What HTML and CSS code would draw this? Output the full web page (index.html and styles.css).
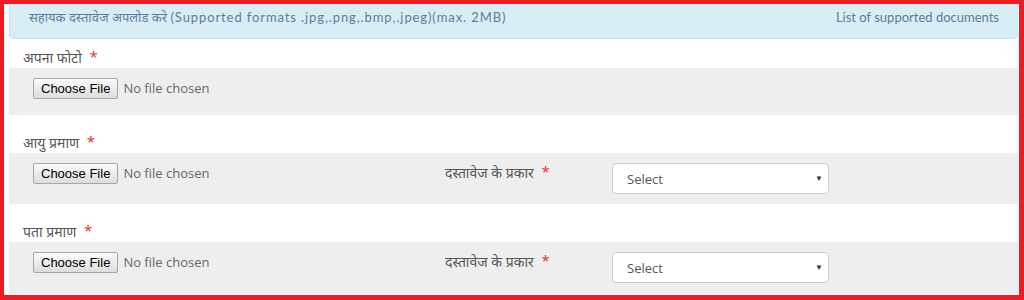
FILE: index.html
```html
<!DOCTYPE html>
<html>

<head>
  <meta charset="UTF-8">
  <title>दस्तावेज अपलोड</title>
  <link rel="stylesheet" href="styles.css">
</head>

<body>
  <div class="frame">
    <div class="uploadInfo">
      <span class="infoText">सहायक दस्तावेज अपलोड करे <span class="formats">(Supported formats .jpg,.png,.bmp,.jpeg)(max. 2MB)</span></span>
      <a class="docList">List of supported documents</a>
    </div>

    <div class="docGroup first">
      <div class="docLabel">अपना फोटो <span class="required">*</span></div>
      <div class="docRow">
        <div class="fileCol">
          <label class="fileInput"><span class="fileBtn">Choose File</span><span class="fileName">No file chosen</span></label>
        </div>
      </div>
    </div>

    <div class="docGroup">
      <div class="docLabel">आयु प्रमाण <span class="required">*</span></div>
      <div class="docRow">
        <div class="fileCol">
          <label class="fileInput"><span class="fileBtn">Choose File</span><span class="fileName">No file chosen</span></label>
        </div>
        <div class="typeLabel">दस्तावेज के प्रकार <span class="required">*</span></div>
        <div class="selectWrap">
          <select class="docType">
            <option>Select</option>
          </select>
          <span class="caret">▼</span>
        </div>
      </div>
    </div>

    <div class="docGroup">
      <div class="docLabel">पता प्रमाण <span class="required">*</span></div>
      <div class="docRow">
        <div class="fileCol">
          <label class="fileInput"><span class="fileBtn">Choose File</span><span class="fileName">No file chosen</span></label>
        </div>
        <div class="typeLabel">दस्तावेज के प्रकार <span class="required">*</span></div>
        <div class="selectWrap">
          <select class="docType">
            <option>Select</option>
          </select>
          <span class="caret">▼</span>
        </div>
      </div>
    </div>
  </div>
</body>

</html>
```

FILE: styles.css
```css
html,
body {
  margin: 0;
  padding: 0;
}

body {
  width: 1024px;
  height: 300px;
  overflow: hidden;
  background-color: #fff;
  font-family: "Open Sans", "Noto Sans", "Noto Sans Devanagari", "Lohit Devanagari", sans-serif;
  color: #555;
}

.frame {
  box-sizing: border-box;
  width: 1024px;
  height: 300px;
  overflow: hidden;
  border: solid #ed1c24;
  border-width: 4px 5px 5px 4px;
  padding: 0 1px 0 5px;
  background-color: #fff;
}

.uploadInfo {
  display: flex;
  justify-content: space-between;
  height: 20px;
  margin-top: -10px;
  padding: 12px 18px 11px 19px;
  line-height: 20px;
  font-size: 13px;
  color: #5d7d97;
  background-color: #d9edf7;
  border: 1px solid #bce8f1;
  border-radius: 4px;
}

.formats,
.docList {
  font-family: "Lato", "Liberation Sans", sans-serif;
}

.formats {
  letter-spacing: 0.9px;
}

.docLabel {
  height: 20px;
  margin-top: 18px;
  padding-left: 14px;
  line-height: 20px;
  font-size: 14px;
}

.docGroup.first .docLabel {
  margin-top: 9px;
}

.required {
  margin-left: 4px;
  color: #ec2a2a;
  font-size: 15px;
  line-height: 1;
  vertical-align: top;
  position: relative;
  top: 1px;
}

.docRow {
  display: grid;
  grid-template-columns: 412px 167px 217px;
  min-height: 27px;
  padding: 10px 0 10px 24px;
  background-color: #eee;
}

.fileInput {
  display: flex;
  align-items: center;
  height: 21px;
}

.fileBtn {
  box-sizing: border-box;
  height: 21px;
  padding: 0 7px;
  line-height: 19px;
  font-family: "Liberation Sans", Arial, sans-serif;
  font-size: 13px;
  color: #000;
  background: linear-gradient(#fbfbfb, #dddddd);
  border: 1px solid #a6a6a6;
  border-radius: 2px;
}

.fileName {
  margin-left: 5px;
  line-height: 21px;
  font-size: 13px;
  color: #666;
}

.typeLabel {
  height: 20px;
  line-height: 20px;
  font-size: 14px;
}

.selectWrap {
  position: relative;
  height: 31px;
}

.docType {
  box-sizing: border-box;
  display: block;
  width: 217px;
  height: 31px;
  padding: 0 14px;
  -webkit-appearance: none;
  appearance: none;
  font-family: "Open Sans", sans-serif;
  font-size: 13px;
  color: #555;
  background-color: #fff;
  border: 1px solid #ccc;
  border-radius: 4px;
}

.caret {
  position: absolute;
  right: 6px;
  top: 9px;
  font-size: 8px;
  color: #333;
}
```
